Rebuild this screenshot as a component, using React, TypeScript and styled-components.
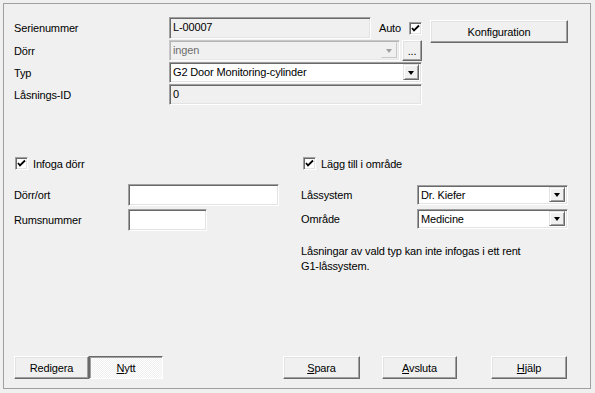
import React from "react";
import styled, { createGlobalStyle } from "styled-components";

const GlobalStyle = createGlobalStyle`
  html, body {
    margin: 0;
    padding: 0;
    background: #f0f0f0;
  }
  body {
    font-family: "Liberation Sans", Arial, sans-serif;
    font-size: 11px;
    letter-spacing: -0.15px;
    color: #000;
  }
`;

const Window = styled.div`
  box-sizing: border-box;
  width: 595px;
  height: 393px;
  padding: 3px 4px 4px 3px;
  background: #f0f0f0;
`;

const Frame = styled.div`
  box-sizing: border-box;
  width: 588px;
  height: 386px;
  border: 1px solid #a0a0a0;
  display: flex;
  flex-direction: column;
`;

const Top = styled.div`
  display: flex;
  align-items: flex-start;
  padding: 13px 0 0 10px;
`;

const FieldGrid = styled.div`
  display: grid;
  grid-template-columns: 155px 253px;
  grid-template-rows: 22px 21px 21px 21px;
  row-gap: 1px;
`;

const Label = styled.div`
  display: flex;
  align-items: center;
  white-space: nowrap;
`;

const Cell = styled.div`
  display: flex;
  align-items: stretch;
`;

const Sunken = styled.div<{ $w?: number; $bg?: string; $disabled?: boolean }>`
  box-sizing: border-box;
  width: ${(p) => (p.$w ? `${p.$w}px` : "100%")};
  height: 100%;
  display: flex;
  align-items: stretch;
  background: ${(p) => p.$bg || "#fff"};
  color: ${(p) => (p.$disabled ? "#6d6d6d" : "#000")};
  border: 1px solid;
  border-color: ${(p) =>
    p.$disabled ? "#c8c8c8 #fff #fff #c8c8c8" : "#a0a0a0 #fff #fff #a0a0a0"};
  box-shadow: ${(p) =>
    p.$disabled
      ? "inset 1px 1px 0 #b4b4b4, inset -1px -1px 0 #e8e8e8"
      : "inset 1px 1px 0 #696969, inset -1px -1px 0 #e3e3e3"};
  padding: 1px 2px 2px 1px;
`;

const Value = styled.div`
  flex: 1;
  padding: 1px 0 0 2px;
  line-height: 14px;
  white-space: nowrap;
  overflow: hidden;
`;

const ArrowBox = styled.div<{ $disabled?: boolean }>`
  box-sizing: border-box;
  width: 16px;
  display: flex;
  align-items: center;
  justify-content: center;
  background: #f0f0f0;
  border: 1px solid;
  border-color: ${(p) =>
    p.$disabled ? "#f0f0f0 #c8c8c8 #c8c8c8 #f0f0f0" : "#e3e3e3 #696969 #696969 #e3e3e3"};
  box-shadow: ${(p) =>
    p.$disabled ? "none" : "inset 1px 1px 0 #fff, inset -1px -1px 0 #a0a0a0"};
`;

const Triangle = styled.div<{ $disabled?: boolean }>`
  width: 0;
  height: 0;
  border-left: 3.5px solid transparent;
  border-right: 3.5px solid transparent;
  border-top: 4px solid ${(p) => (p.$disabled ? "#a0a0a0" : "#000")};
  margin-top: 1px;
`;

const Button = styled.button<{ $w: number; $h?: number; $pressed?: boolean }>`
  box-sizing: border-box;
  width: ${(p) => p.$w}px;
  height: ${(p) => p.$h || 23}px;
  padding: 0;
  font: inherit;
  letter-spacing: inherit;
  color: #000;
  background: #f0f0f0;
  border: 1px solid;
  border-color: ${(p) =>
    p.$pressed ? "#696969 #fff #fff #696969" : "#fff #696969 #696969 #fff"};
  box-shadow: ${(p) =>
    p.$pressed
      ? "inset 1px 1px 0 #a0a0a0"
      : "inset -1px -1px 0 #a0a0a0, inset 1px 1px 0 #e3e3e3"};
  ${(p) =>
    p.$pressed &&
    `background-image: repeating-conic-gradient(#ffffff 0 25%, #f0f0f0 0 50%);
     background-size: 2px 2px;`}
  u {
    text-decoration: underline;
    text-underline-offset: 1px;
  }
`;

const AutoText = styled.span`
  margin-left: 8px;
  align-self: center;
`;

const BoxWrap = styled.div<{ $ml?: number }>`
  box-sizing: border-box;
  width: 13px;
  height: 13px;
  margin-left: ${(p) => p.$ml || 0}px;
  flex: none;
  background: #fff;
  border: 1px solid;
  border-color: #a0a0a0 #fff #fff #a0a0a0;
  box-shadow: inset 1px 1px 0 #696969, inset -1px -1px 0 #e3e3e3;
  display: flex;
  align-items: center;
  justify-content: center;
  align-self: center;
`;

const CheckRow = styled.label<{ $ml?: number }>`
  display: flex;
  align-items: center;
  gap: 5px;
  height: 13px;
  margin-left: ${(p) => p.$ml || 0}px;
`;

const SideCol = styled.div`
  margin-left: 8px;
  padding-top: 3px;
`;

const Section = styled.div`
  display: flex;
  align-items: flex-start;
  margin-top: 52px;
`;

const LeftCol = styled.div`
  width: 287px;
  padding-left: 10px;
`;

const RightCol = styled.div`
  flex: 1;
`;

const FormGrid = styled.div<{ $cols: string; $rows: string; $gap: number; $mt: number }>`
  display: grid;
  grid-template-columns: ${(p) => p.$cols};
  grid-template-rows: ${(p) => p.$rows};
  row-gap: ${(p) => p.$gap}px;
  margin-top: ${(p) => p.$mt}px;
`;

const Message = styled.p`
  margin: 15px 0 0 0;
  line-height: 15px;
`;

const ButtonBar = styled.div`
  margin-top: auto;
  display: flex;
  align-items: center;
  padding: 0 23px 9px 10px;
`;

const Group = styled.div`
  display: flex;
`;

const Spacer = styled.div<{ $w: number }>`
  width: ${(p) => p.$w}px;
  flex: none;
`;

const CheckMark = () => (
  <svg width="9" height="9" viewBox="0 0 9 9">
    <path d="M1 4 L3 6.5 L8 1.5" fill="none" stroke="#000" strokeWidth="1.8" />
  </svg>
);

const Check = ({ ml }: { ml?: number }) => (
  <BoxWrap $ml={ml}>
    <CheckMark />
  </BoxWrap>
);

const Combo = ({ value, w, disabled }: { value: string; w?: number; disabled?: boolean }) => (
  <Sunken $w={w} $bg={disabled ? "#f0f0f0" : "#fff"} $disabled={disabled}>
    <Value>{value}</Value>
    <ArrowBox $disabled={disabled}>
      <Triangle $disabled={disabled} />
    </ArrowBox>
  </Sunken>
);

const TextField = ({ value = "", w, bg }: { value?: string; w?: number; bg?: string }) => (
  <Sunken $w={w} $bg={bg}>
    <Value>{value}</Value>
  </Sunken>
);

export default function App() {
  return (
    <Window>
      <GlobalStyle />
      <Frame>
        <Top>
          <FieldGrid>
            <Label>Serienummer</Label>
            <Cell>
              <TextField value="L-00007" w={202} bg="#f0f0f0" />
              <AutoText>Auto</AutoText>
              <Check ml={8} />
            </Cell>
            <Label>Dörr</Label>
            <Cell>
              <Combo value="ingen" w={232} disabled />
              <Spacer $w={2} />
              <Button $w={20} $h={21}>...</Button>
            </Cell>
            <Label>Typ</Label>
            <Cell>
              <Combo value="G2 Door Monitoring-cylinder" />
            </Cell>
            <Label>Låsnings-ID</Label>
            <Cell>
              <TextField value="0" bg="#f0f0f0" />
            </Cell>
          </FieldGrid>
          <SideCol>
            <Button $w={138}>Konfiguration</Button>
          </SideCol>
        </Top>

        <Section>
          <LeftCol>
            <CheckRow $ml={1}>
              <Check />
              <span>Infoga dörr</span>
            </CheckRow>
            <FormGrid $cols="114px 151px" $rows="22px 22px" $gap={3} $mt={14}>
              <Label>Dörr/ort</Label>
              <TextField />
              <Label>Rumsnummer</Label>
              <TextField w={79} />
            </FormGrid>
          </LeftCol>
          <RightCol>
            <CheckRow $ml={2}>
              <Check />
              <span>Lägg till i område</span>
            </CheckRow>
            <FormGrid $cols="116px 151px" $rows="20px 20px" $gap={4} $mt={15}>
              <Label>Låssystem</Label>
              <Combo value="Dr. Kiefer" />
              <Label>Område</Label>
              <Combo value="Medicine" />
            </FormGrid>
            <Message>
              Låsningar av vald typ kan inte infogas i ett rent
              <br />
              G1-låssystem.
            </Message>
          </RightCol>
        </Section>

        <ButtonBar>
          <Group>
            <Button $w={75}>Redigera</Button>
            <Button $w={74} $pressed>
              <u>N</u>ytt
            </Button>
          </Group>
          <Spacer $w={120} />
          <Group>
            <Button $w={77}>
              <u>S</u>para
            </Button>
            <Spacer $w={22} />
            <Button $w={75}>
              <u>A</u>vsluta
            </Button>
            <Spacer $w={34} />
            <Button $w={76}>
              <u>H</u>jälp
            </Button>
          </Group>
        </ButtonBar>
      </Frame>
    </Window>
  );
}
